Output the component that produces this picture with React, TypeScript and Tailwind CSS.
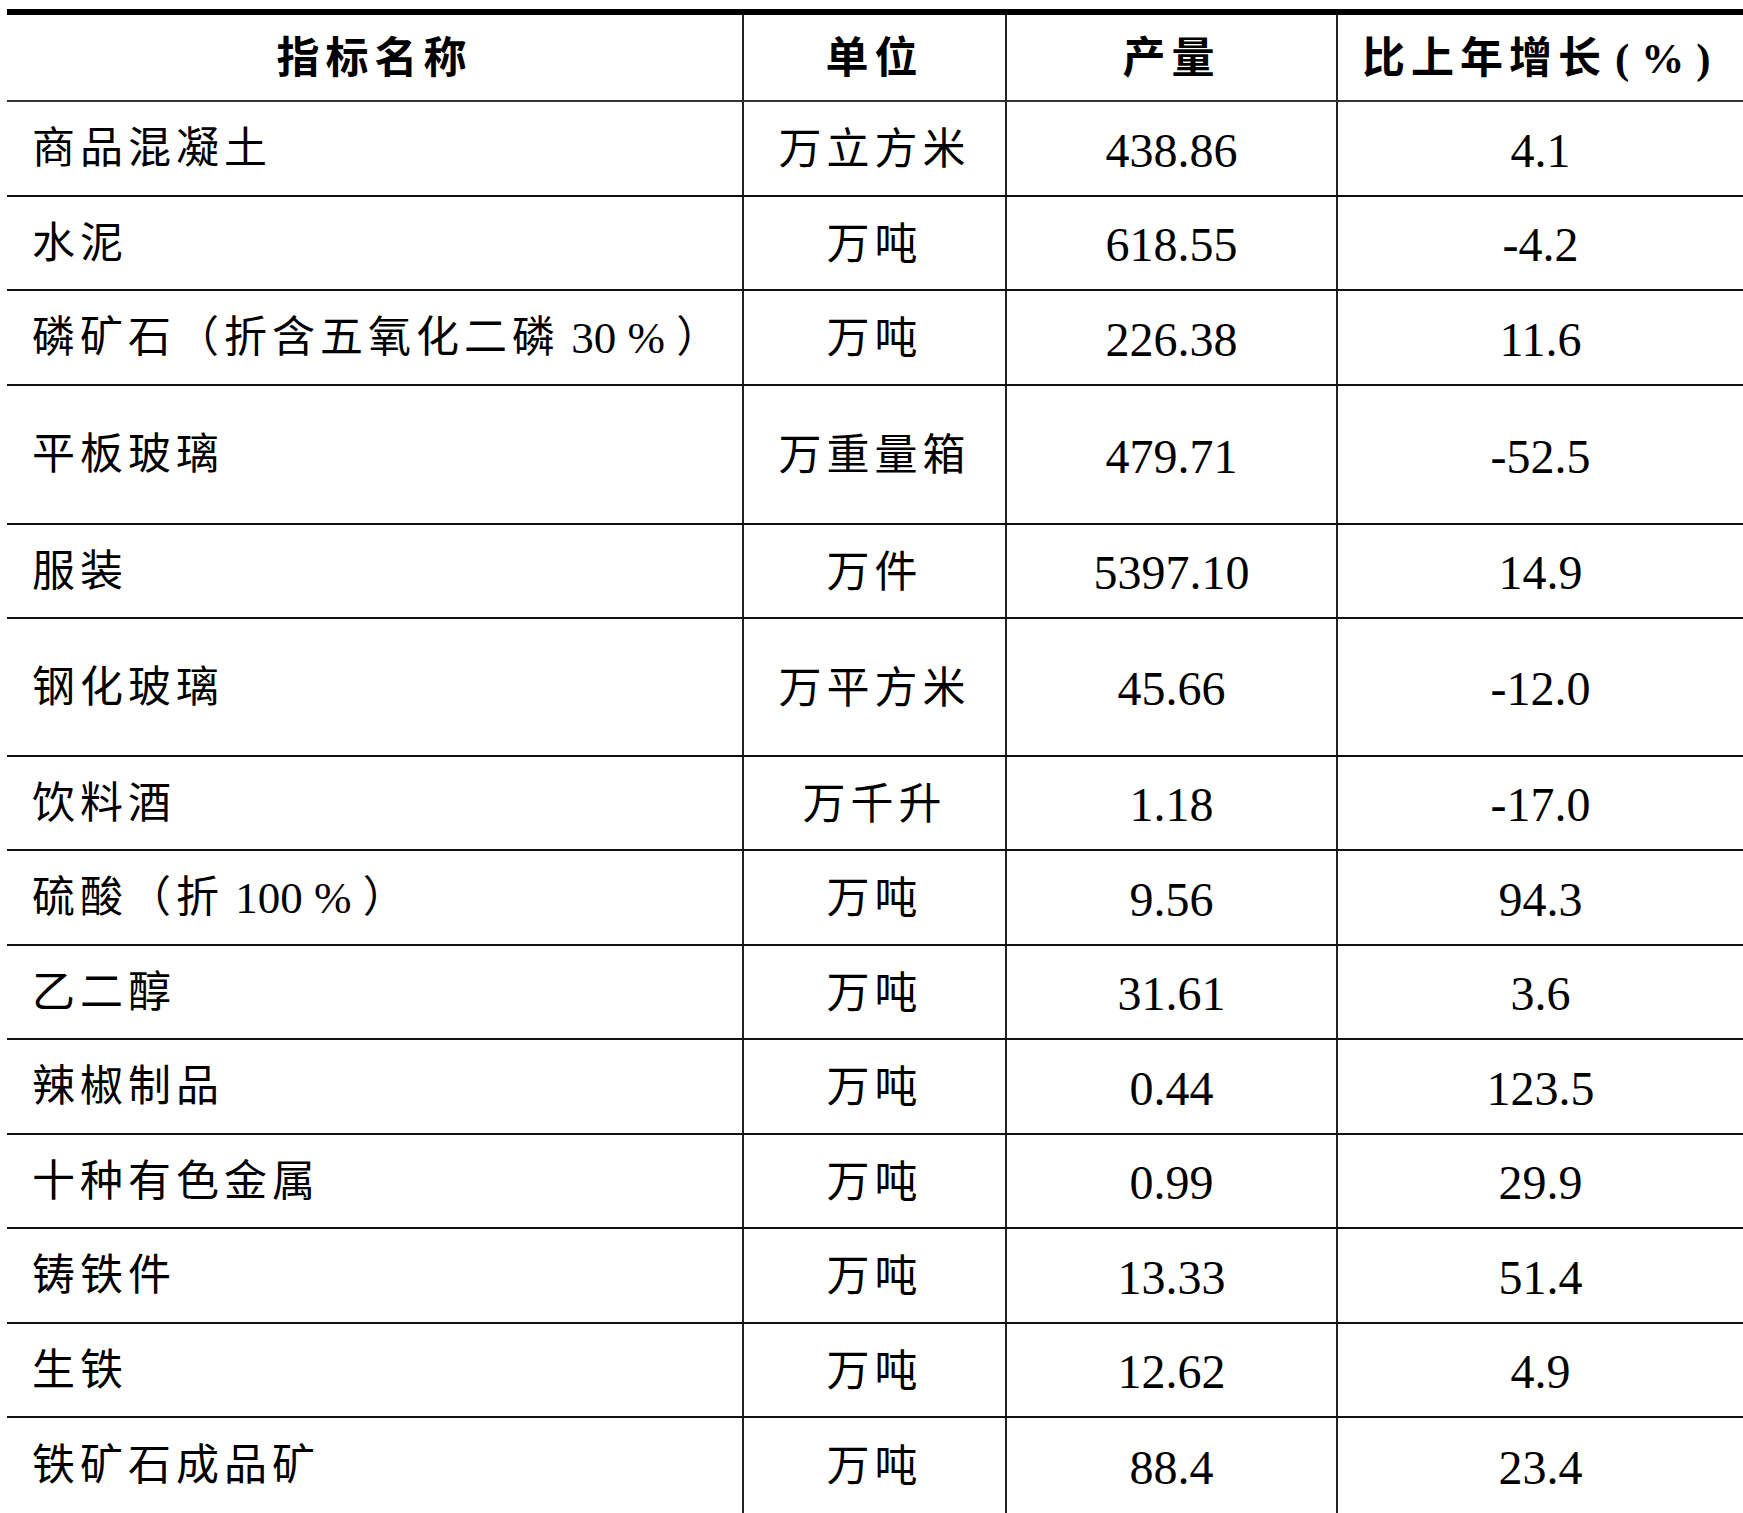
import React from 'react';

interface Row {
  name: React.ReactNode;
  key: string;
  unit: string;
  output: string;
  growth: string;
  height: string;
}

const num = (s: string) => <span className="tracking-normal text-[45px]">{s}</span>;

const rows: Row[] = [
  { key: 'a', name: '商品混凝土', unit: '万立方米', output: '438.86', growth: '4.1', height: 'h-[95px]' },
  { key: 'b', name: '水泥', unit: '万吨', output: '618.55', growth: '-4.2', height: 'h-[94px]' },
  {
    key: 'c',
    name: (
      <>
        磷矿石（折含五氧化二磷{num('\u00a030\u00a0%\u00a0')}）
      </>
    ),
    unit: '万吨',
    output: '226.38',
    growth: '11.6',
    height: 'h-[95px]',
  },
  { key: 'd', name: '平板玻璃', unit: '万重量箱', output: '479.71', growth: '-52.5', height: 'h-[139px]' },
  { key: 'e', name: '服装', unit: '万件', output: '5397.10', growth: '14.9', height: 'h-[94px]' },
  { key: 'f', name: '钢化玻璃', unit: '万平方米', output: '45.66', growth: '-12.0', height: 'h-[138px]' },
  { key: 'g', name: '饮料酒', unit: '万千升', output: '1.18', growth: '-17.0', height: 'h-[94px]' },
  {
    key: 'h',
    name: (
      <>
        硫酸（折{num('\u00a0100\u00a0%\u00a0')}）
      </>
    ),
    unit: '万吨',
    output: '9.56',
    growth: '94.3',
    height: 'h-[95px]',
  },
  { key: 'i', name: '乙二醇', unit: '万吨', output: '31.61', growth: '3.6', height: 'h-[94px]' },
  { key: 'j', name: '辣椒制品', unit: '万吨', output: '0.44', growth: '123.5', height: 'h-[95px]' },
  { key: 'k', name: '十种有色金属', unit: '万吨', output: '0.99', growth: '29.9', height: 'h-[94px]' },
  { key: 'l', name: '铸铁件', unit: '万吨', output: '13.33', growth: '51.4', height: 'h-[95px]' },
  { key: 'm', name: '生铁', unit: '万吨', output: '12.62', growth: '4.9', height: 'h-[94px]' },
  { key: 'n', name: '铁矿石成品矿', unit: '万吨', output: '88.4', growth: '23.4', height: 'h-[95px]' },
];

const font = "font-['Liberation_Serif','Noto_Sans_CJK_SC',serif]";

export default function App() {
  return (
    <div className={`bg-white pt-[9px] pl-[7px] text-black ${font}`}>
      <div className="border-t-[6px] border-black">
        {/* Header */}
        <div className="grid h-[87px] grid-cols-[735px_263px_331px_407px] border-b-2 border-[#333]">
          <div className="flex items-center justify-center pt-[4px] text-[43px] font-bold tracking-[6px]">指标名称</div>
          <div className="flex items-center justify-center border-l-2 border-[#222] pt-[4px] text-[43px] font-bold tracking-[6px]">
            单位
          </div>
          <div className="flex items-center justify-center border-l-2 border-[#222] pt-[4px] text-[43px] font-bold tracking-[6px]">
            产量
          </div>
          <div className="flex items-center whitespace-nowrap border-l-2 border-[#222] pt-[4px] pl-[24px] text-[43px] font-bold tracking-[6px]">
            比上年增长
            <span className="ml-[8px] tracking-normal">
              (<span className="mx-[12px]">%</span>)
            </span>
          </div>
        </div>

        {/* Body */}
        {rows.map((r, i) => (
          <div
            key={r.key}
            className={`grid grid-cols-[735px_263px_331px_407px] ${r.height} ${
              i < rows.length - 1 ? 'border-b-2 border-[#111]' : ''
            }`}
          >
            <div className="flex items-center whitespace-nowrap pl-[25px] pt-[2px] text-[43px] tracking-[5px]">{r.name}</div>
            <div className="flex items-center justify-center whitespace-nowrap border-l-2 border-[#222] pt-[4px] text-[43px] tracking-[5px]">
              {r.unit}
            </div>
            <div className="flex items-center justify-center border-l-2 border-[#222] pt-[4px] text-[48px]">{r.output}</div>
            <div className="flex items-center justify-center border-l-2 border-[#222] pt-[4px] text-[48px]">{r.growth}</div>
          </div>
        ))}
      </div>
    </div>
  );
}
